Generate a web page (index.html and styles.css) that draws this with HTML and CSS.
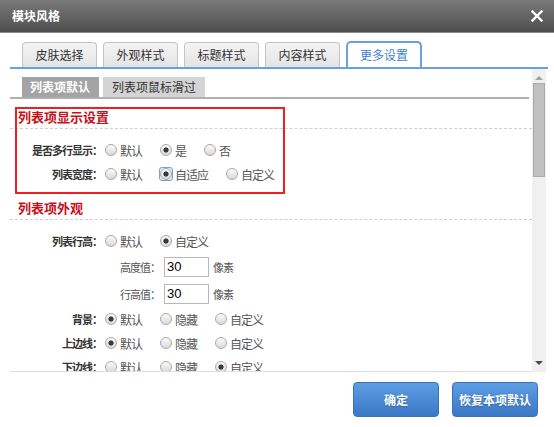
FILE: index.html
```html
<!DOCTYPE html>
<html lang="zh-CN">
<head>
<meta charset="utf-8">
<title>模块风格</title>
<link rel="stylesheet" href="styles.css">
</head>
<body>
<div class="dialog">
  <div class="titlebar">
    <span class="title">模块风格</span>
    <span class="close"><svg width="12" height="12" viewBox="0 0 12 12"><path d="M1.5 1.5 L10.5 10.5 M10.5 1.5 L1.5 10.5" stroke="#fff" stroke-width="2.4" stroke-linecap="square"/></svg></span>
  </div>
  <div class="tabs">
    <div class="tab">皮肤选择</div>
    <div class="tab">外观样式</div>
    <div class="tab">标题样式</div>
    <div class="tab">内容样式</div>
    <div class="tab active">更多设置</div>
  </div>
  <div class="panel">
    <div class="body">
      <div class="subtabs">
        <div class="subtab active">列表项默认</div>
        <div class="subtab">列表项鼠标滑过</div>
      </div>
      <div class="section first">
        <div class="highlight"></div>
        <div class="sec-title">列表项显示设置</div>
        <div class="rows">
          <div class="row">
            <span class="label">是否多行显示：</span>
            <span class="opt"><i class="radio"></i>默认</span>
            <span class="opt"><i class="radio on"></i>是</span>
            <span class="opt"><i class="radio"></i>否</span>
          </div>
          <div class="row">
            <span class="label">列表宽度：</span>
            <span class="opt"><i class="radio"></i>默认</span>
            <span class="opt"><span class="ring"><i class="radio on"></i></span>自适应</span>
            <span class="opt"><i class="radio"></i>自定义</span>
          </div>
        </div>
      </div>
      <div class="section second">
        <div class="sec-title">列表项外观</div>
        <div class="rows">
          <div class="row">
            <span class="label">列表行高：</span>
            <span class="opt"><i class="radio"></i>默认</span>
            <span class="opt"><i class="radio on"></i>自定义</span>
          </div>
          <div class="row sub">
            <span class="sublabel">高度值：</span>
            <input class="num" type="text" value="30">
            <span class="unit">像素</span>
          </div>
          <div class="row sub">
            <span class="sublabel">行高值：</span>
            <input class="num" type="text" value="30">
            <span class="unit">像素</span>
          </div>
          <div class="row">
            <span class="label">背景：</span>
            <span class="opt"><i class="radio on"></i>默认</span>
            <span class="opt"><i class="radio"></i>隐藏</span>
            <span class="opt"><i class="radio"></i>自定义</span>
          </div>
          <div class="row">
            <span class="label">上边线：</span>
            <span class="opt"><i class="radio on"></i>默认</span>
            <span class="opt"><i class="radio"></i>隐藏</span>
            <span class="opt"><i class="radio"></i>自定义</span>
          </div>
          <div class="row">
            <span class="label">下边线：</span>
            <span class="opt"><i class="radio"></i>默认</span>
            <span class="opt"><i class="radio"></i>隐藏</span>
            <span class="opt"><i class="radio on"></i>自定义</span>
          </div>
        </div>
      </div>
    </div>
    <div class="scrollbar">
      <span class="arrow up"></span>
      <span class="thumb"></span>
      <span class="spacer"></span>
      <span class="arrow down"></span>
    </div>
  </div>
  <div class="buttons">
    <button class="btn">确定</button>
    <button class="btn">恢复本项默认</button>
  </div>
</div>
</body>
</html>
```
FILE: styles.css
```css
html, body {
  margin: 0;
  padding: 0;
  background: #fff;
}
body {
  font-family: "Noto Sans CJK SC", "Noto Sans", sans-serif;
  color: #333;
}
.dialog {
  width: 554px;
  height: 427px;
  overflow: hidden;
  background: #fff;
}
.titlebar {
  height: 33px;
  box-sizing: border-box;
  border-bottom: 1px solid #8c8c8c;
  background: linear-gradient(#7a7a7a, #4e4e4e);
  display: flex;
  align-items: center;
  justify-content: space-between;
  padding: 0 11px 0 12px;
}
.title {
  color: #fff;
  font-size: 12px;
  font-weight: bold;
  line-height: 1;
}
.close {
  display: flex;
  align-items: center;
}
.tabs {
  margin: 8px 6px 0 10px;
  height: 26px;
  padding-left: 12px;
  border-bottom: 2px solid #6a9fe0;
  display: flex;
  align-items: flex-end;
}
.tab {
  width: 75px;
  height: 25px;
  box-sizing: border-box;
  margin-right: 6px;
  border: 1px solid #c4c4c4;
  border-bottom: none;
  border-radius: 4px 4px 0 0;
  background: linear-gradient(#f4f4f4, #e4e4e4);
  font-size: 12px;
  line-height: 24px;
  text-align: center;
  color: #333;
}
.tab.active {
  width: 76px;
  height: 26px;
  border: 2px solid #6a9fe0;
  border-bottom: none;
  border-radius: 5px 5px 0 0;
  background: #fff;
  color: #3d7fd6;
  line-height: 24px;
}
.panel {
  margin: 0 8px 0 10px;
  height: 303px;
  display: flex;
}
.body {
  flex: 1;
  height: 303px;
  box-sizing: border-box;
  border-bottom: 1px solid #dedede;
  overflow: hidden;
  padding-top: 8px;
}
.subtabs {
  display: flex;
  padding-left: 12px;
  border-bottom: 2px solid #b0b0b0;
  margin-right: 3px;
}
.subtab {
  height: 20px;
  line-height: 20px;
  font-size: 12px;
  padding: 0 9px 0 9px;
  margin-right: 4px;
  background: #d4d4d4;
  color: #333;
}
.subtab.active {
  background: #a4a4a4;
  color: #fff;
  font-weight: bold;
  padding: 0 9px 0 8px;
}
.section {
  position: relative;
}
.section.first {
  margin-top: 7px;
}
.section.second {
  margin-top: 11px;
}
.highlight {
  position: absolute;
  left: 5px;
  top: 1px;
  width: 270px;
  height: 87px;
  box-sizing: border-box;
  border: 2px solid #f01e1e;
  pointer-events: none;
}
.sec-title {
  height: 22px;
  line-height: 22px;
  padding-left: 8px;
  border-bottom: 1px dashed #cfcfcf;
  font-size: 13px;
  font-weight: bold;
  color: #c8101a;
}
.rows {
  padding-top: 9px;
}
.row {
  height: 24px;
  display: flex;
  align-items: center;
}
.row.sub {
  height: 27px;
  padding-left: 95px;
}
.label {
  width: 92px;
  margin-right: 3px;
  text-align: right;
  font-size: 11px;
  letter-spacing: -1px;
  font-weight: bold;
  color: #333;
  white-space: nowrap;
}
.sublabel {
  width: 55px;
  text-align: right;
  font-size: 11px;
  letter-spacing: -1px;
  color: #555;
  white-space: nowrap;
}
.opt {
  display: inline-flex;
  align-items: center;
  margin-right: 18px;
  font-size: 12px;
  letter-spacing: -1px;
  color: #555;
  white-space: nowrap;
}
.radio {
  display: inline-block;
  width: 12px;
  height: 12px;
  box-sizing: border-box;
  border: 1px solid #a9a9a9;
  border-radius: 50%;
  background: linear-gradient(#fbfbfb, #d9d9d9);
  margin-right: 3px;
}
.radio.on {
  background: radial-gradient(circle, #3a3a3a 0, #3a3a3a 2.2px, rgba(58,58,58,0) 3px), linear-gradient(#fbfbfb, #d9d9d9);
}
.ring {
  display: inline-flex;
  border: 1px solid #6f9fe2;
  border-radius: 3px;
  margin: -1px 2px -1px -1px;
  background: #e8f0fb;
}
.ring .radio {
  margin-right: 0;
}
.num {
  width: 45px;
  height: 20px;
  box-sizing: border-box;
  margin: 0 0 0 4px;
  padding: 0 0 0 2px;
  border: 1px solid #b8b8b8;
  font-family: "Liberation Sans", Arial, sans-serif;
  font-size: 13px;
  color: #000;
  outline: none;
}
.unit {
  margin-left: 4px;
  font-size: 11px;
  letter-spacing: -1px;
  color: #555;
}
.scrollbar {
  width: 14px;
  height: 303px;
  background: #f0f0f0;
  display: flex;
  flex-direction: column;
  align-items: center;
}
.arrow {
  width: 0;
  height: 0;
  border-left: 4px solid transparent;
  border-right: 4px solid transparent;
}
.arrow.up {
  margin-top: 7px;
  border-bottom: 4px solid #a3a3a3;
}
.arrow.down {
  margin-bottom: 7px;
  border-top: 4px solid #4a4a4a;
}
.thumb {
  margin-top: 3px;
  width: 12px;
  height: 94px;
  box-sizing: border-box;
  border: 1px solid #a9a9a9;
  background: #c0c0c0;
}
.spacer {
  flex: 1;
}
.buttons {
  margin-top: 10px;
  display: flex;
  justify-content: flex-end;
  gap: 13px;
  padding-right: 16px;
}
.btn {
  width: 86px;
  height: 35px;
  border: 1px solid #3a72ba;
  border-radius: 4px;
  background: linear-gradient(#5c9de3, #3b78c5);
  color: #fff;
  font-family: "Noto Sans CJK SC", sans-serif;
  font-size: 12px;
  font-weight: bold;
  padding: 0;
  text-shadow: 0 1px 1px rgba(0,0,0,0.25);
}
```
